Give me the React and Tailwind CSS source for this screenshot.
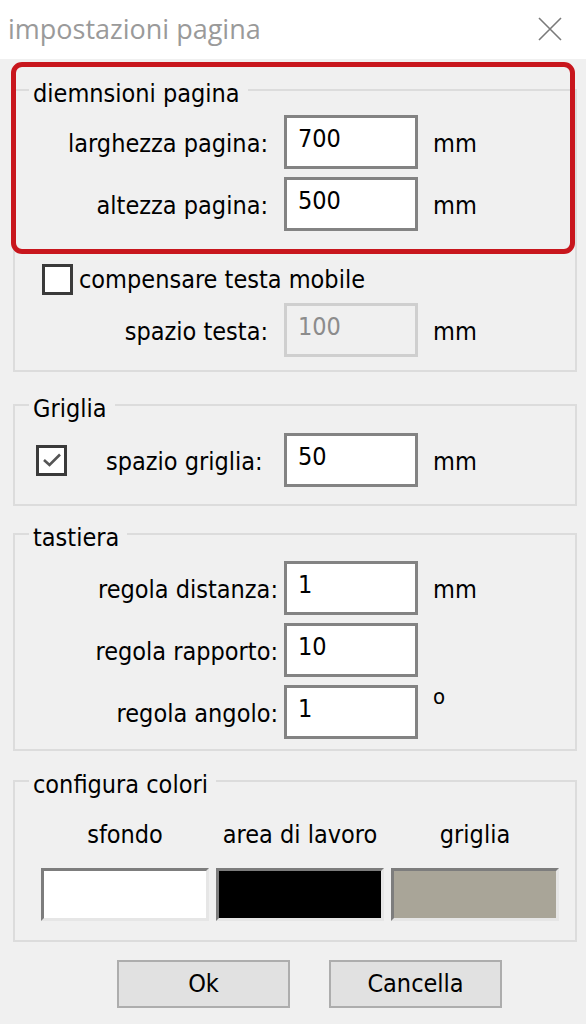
import React from 'react';

const dlgFont = { fontFamily: '"DejaVu Sans Condensed", "DejaVu Sans", sans-serif' };

// Edit box in the classic Win32 look
const Field = ({ value, disabled = false }) => (
    <div className={`w-[134px] h-[54px] pl-[11px] pt-[6px] text-[25px] leading-[30px] border-[3px] ${disabled ? 'border-[#cfcfcf] bg-[#f0f0f0] text-[#8c8c8c]' : 'border-[#838383] bg-white text-black'}`}>
        {value}
    </div>
);

const Check = ({ checked = false }) => (
    <div className="w-[31px] h-[31px] border-[3px] border-[#3a3a3a] bg-white flex items-center justify-center shrink-0">
        {checked && (
            <svg width="22" height="18" viewBox="0 0 22 18">
                <path d="M3 9 L8.5 14 L19 3.5" fill="none" stroke="#555" strokeWidth="2.6" />
            </svg>
        )}
    </div>
);

const Group = ({ title, className = '', children }) => (
    <fieldset className={`border-2 border-[#dcdcdc] ${className}`}>
        <legend className="ml-[14px] pl-1 pr-2 pt-[8px] text-[25px] leading-[24px] text-black">{title}</legend>
        {children}
    </fieldset>
);

const Row = ({ label, value, unit, labelW, disabled }) => (
    <div className="flex items-center">
        <div className={`${labelW} text-right text-[25px] leading-[30px] pt-1`}>{label}</div>
        <Field value={value} disabled={disabled} />
        {unit && <span className="ml-[15px] text-[25px] leading-[30px] pt-1">{unit}</span>}
    </div>
);

const Swatch = ({ color }) => (
    <div className={`w-[168px] h-[53px] border-[3px] border-t-[#7d7d7d] border-l-[#7d7d7d] border-b-[#e6e6e6] border-r-[#e6e6e6] ${color}`} />
);

export default function App() {
    return (
        <div className="w-[586px] h-[1024px] flex flex-col overflow-hidden" style={dlgFont}>

            {/* Title bar */}
            <div className="h-[59px] bg-white flex items-center justify-between pl-2 pr-6 shrink-0">
                <span className="text-[27px] text-[#9a9a9a]" style={{ fontFamily: '"Open Sans", "Noto Sans", sans-serif' }}>impostazioni pagina</span>
                <svg width="24" height="24" viewBox="0 0 24 24" className="-mt-[1px]">
                    <path d="M1 1 L23 23 M23 1 L1 23" stroke="#7a7a7a" strokeWidth="1.6" />
                </svg>
            </div>

            {/* Dialog body */}
            <div className="flex-1 bg-[#f0f0f0] pl-[13px] pr-[9px] relative text-black">

                <Group title="diemnsioni pagina" className="mt-[15px] pb-[13px]">
                    <div className="pt-[9px] flex flex-col gap-[8px]">
                        <Row label="larghezza pagina:" value="700" unit="mm" labelW="w-[269px] pr-[16px]" />
                        <Row label="altezza pagina:" value="500" unit="mm" labelW="w-[269px] pr-[16px]" />
                    </div>
                    <div className="mt-[33px] ml-[27px] flex items-center gap-[6px]">
                        <Check />
                        <span className="text-[25px] leading-[30px]">compensare testa mobile</span>
                    </div>
                    <div className="mt-[8px]">
                        <Row label="spazio testa:" value="100" unit="mm" labelW="w-[269px] pr-[16px]" disabled />
                    </div>
                </Group>

                <Group title="Griglia" className="mt-[17px] pb-[17px]">
                    <div className="pt-[12px] flex items-center">
                        <div className="w-[269px] flex items-center pl-[21px]">
                            <Check checked />
                            <span className="ml-[39px] text-[25px] leading-[30px] pt-1">spazio griglia:</span>
                        </div>
                        <Field value="50" />
                        <span className="ml-[15px] text-[25px] leading-[30px] pt-1">mm</span>
                    </div>
                </Group>

                <Group title="tastiera" className="mt-[12px] pb-[10px]">
                    <div className="pt-[11px] flex flex-col gap-[8px]">
                        <Row label="regola distanza:" value="1" unit="mm" labelW="w-[269px] pr-[6px]" />
                        <Row label="regola rapporto:" value="10" labelW="w-[269px] pr-[6px]" />
                        <div className="flex items-start">
                            <div className="w-[269px] pr-[6px] self-center text-right text-[25px] leading-[30px] pt-1">regola angolo:</div>
                            <Field value="1" />
                            <span className="ml-[15px] text-[22px] leading-[22px] mt-[1px]">o</span>
                        </div>
                    </div>
                </Group>

                <Group title="configura colori" className="mt-[14px] pb-[19px]">
                    <div className="pt-[23px] pl-[26px] flex gap-[7px]">
                        {['sfondo', 'area di lavoro', 'griglia'].map(t => (
                            <div key={t} className="w-[168px] text-center text-[25px] leading-[30px]">{t}</div>
                        ))}
                    </div>
                    <div className="mt-[18px] pl-[26px] flex gap-[7px]">
                        <Swatch color="bg-white" />
                        <Swatch color="bg-black" />
                        <Swatch color="bg-[#a9a598]" />
                    </div>
                </Group>

                <div className="mt-[18px] pl-[104px] flex gap-[39px]">
                    <button className="w-[173px] h-[48px] bg-[#e1e1e1] border-2 border-[#adadad] text-[25px] text-black">Ok</button>
                    <button className="w-[173px] h-[48px] bg-[#e1e1e1] border-2 border-[#adadad] text-[25px] text-black">Cancella</button>
                </div>

                {/* red annotation frame over the page size group */}
                <div className="absolute left-[11px] top-[3px] w-[564px] h-[192px] border-[5px] border-[#c8161d] rounded-[11px] pointer-events-none" />
            </div>
        </div>
    );
}
